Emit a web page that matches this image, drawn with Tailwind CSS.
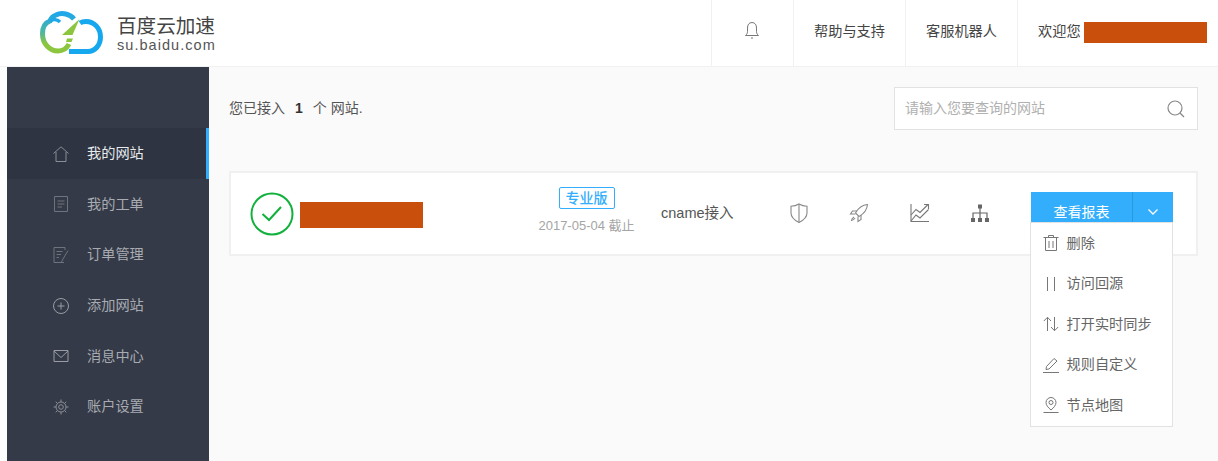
<!DOCTYPE html>
<html lang="zh-CN">
<head>
<meta charset="utf-8">
<script src="https://cdn.jsdelivr.net/npm/@tailwindcss/browser@4"></script>
<title>百度云加速</title>
</head>
<body class="w-[1218px] h-[461px] overflow-hidden bg-[#fdfdfd] font-['Liberation_Sans','Noto_Sans_CJK_SC',sans-serif] text-[14px] text-[#555]">
<header class="h-[67px] bg-white flex border-b border-[#f1f1f1]">
  <div class="w-[711px] flex items-center pl-[40px] gap-[14px]">
    <svg width="63" height="44" viewBox="40 9 63 44" fill="none">
      <defs><linearGradient id="g" x1="0" y1="0" x2="0" y2="1"><stop offset="0" stop-color="#1ea7ea"/><stop offset="0.5" stop-color="#4fb7a0"/><stop offset="0.8" stop-color="#8cc63f"/></linearGradient></defs>
      <path d="M74 17C70 12 62 10 56 13C53 14 51 16 50 19C44 21 42.500 27 42.500 32C42.500 42 50 49 58 49C63 49 67 46 69 42" stroke="url(#g)" stroke-width="5"/>
      <path d="M50 19C53 17 57 17 60 20" stroke="#1ea7ea" stroke-width="3.500"/>
      <path d="M69 49.500H88C95 49.500 100.500 43 100.500 35C100.500 26 94 19.500 86 19.500C83.500 19.500 81.500 20 80 21" stroke="#16a8ee" stroke-width="5"/>
      <path d="M79.500 17L62 33H72.500ZM67 36.500H73L71.500 40H66Z" fill="#8cc63f"/>
    </svg>
    <div class="leading-none text-[#444] pt-[1px]">
      <div class="text-[19.6px] leading-[23px]">百度云加速</div>
      <div class="text-[14.5px] leading-[15px] tracking-[1.05px] text-[#555] font-['Liberation_Sans',sans-serif]">su.baidu.com</div>
    </div>
  </div>
  <div class="w-[82px] border-l border-[#f1f1f1] flex items-center justify-center pb-[6px] pr-[2px]">
    <svg width="16" height="18" viewBox="0 0 16 18" fill="none" stroke="#777" stroke-width="1"><path d="M8 1.500C4.800 1.500 3.500 4 3.500 7V10.500C3.500 12.500 2.500 13.500 1.500 14.500H14.500C13.500 13.500 12.500 12.500 12.500 10.500V7C12.500 4 11.200 1.500 8 1.500Z"/><path d="M7 17H9"/></svg>
  </div>
  <div class="w-[112px] border-l border-[#f1f1f1] flex items-center justify-center text-[14.2px] text-[#444] pb-[2px]">帮助与支持</div>
  <div class="w-[112px] border-l border-[#f1f1f1] flex items-center justify-center text-[14.2px] text-[#444] pb-[2px]">客服机器人</div>
  <div class="flex-1 border-l border-[#f1f1f1] flex items-center pl-[20px] gap-[3px] text-[14.2px] text-[#444] pb-[2px]">
    <span>欢迎您</span>
    <span class="w-[123px] h-[21px] bg-[#c94f0c]"></span>
  </div>
</header>
<div class="flex h-[394px] pl-[7px]">
  <nav class="w-[202px] bg-[#343a47] pt-[61px] text-[14.2px] text-[#a8abb2] shrink-0">
    <a class="h-[51px] flex items-center gap-[18px] pl-[46px] bg-[#2e3441] border-r-[3px] border-[#33aefc] text-[#e8eaec]">
      <svg class="w-[16px] h-[16px] shrink-0" viewBox="0 0 16 16" fill="none" stroke="#8a8e97"><path d="M0.500 7.500L8 0.800L15.500 7.500"/><path d="M3 6V15.500H13V6"/></svg>
      <span>我的网站</span>
    </a>
    <a class="h-[50.500px] flex items-center gap-[18px] pl-[46px]">
      <svg class="w-[16px] h-[16px] shrink-0" viewBox="0 0 16 16" fill="none" stroke="#6f737d"><path d="M1.500 0.500H14.500V15.500H1.500Z"/><path d="M4.500 5H11.500M4.500 8H11.500M4.500 11H9"/></svg>
      <span>我的工单</span>
    </a>
    <a class="h-[50.500px] flex items-center gap-[18px] pl-[46px]">
      <svg class="w-[16px] h-[16px] shrink-0" viewBox="0 0 16 16" fill="none" stroke="#6f737d"><path d="M11 15.500H1V0.500H12V3"/><path d="M3.500 4.500H9.500M3.500 7.500H8M3.500 10.500H6"/><path d="M10 12L15 3.500M8.500 15L10 12"/></svg>
      <span>订单管理</span>
    </a>
    <a class="h-[51px] flex items-center gap-[18px] pl-[46px]">
      <svg class="w-[16px] h-[16px] shrink-0" viewBox="0 0 16 16" fill="none" stroke="#9a9da5"><circle cx="8" cy="8" r="7.500"/><path d="M8 4.500V11.500M4.500 8H11.500"/></svg>
      <span>添加网站</span>
    </a>
    <a class="h-[50.500px] flex items-center gap-[18px] pl-[46px]">
      <svg class="w-[16px] h-[16px] shrink-0" viewBox="0 0 16 16" fill="none" stroke="#9a9da5"><path d="M1 2.500H15V13.500H1Z"/><path d="M1 3L8 9.500L15 3"/></svg>
      <span>消息中心</span>
    </a>
    <a class="h-[50.500px] flex items-center gap-[18px] pl-[46px]">
      <svg class="w-[16px] h-[16px] shrink-0" viewBox="0 0 16 16" fill="none" stroke="#8a8e97"><circle cx="8" cy="8" r="5"/><circle cx="8" cy="8" r="2.300"/><path d="M8 0.500V3M8 13V15.500M0.500 8H3M13 8H15.500M2.700 2.700L4.500 4.500M11.500 11.500L13.300 13.300M13.300 2.700L11.500 4.500M4.500 11.500L2.700 13.300"/></svg>
      <span>账户设置</span>
    </a>
  </nav>
  <main class="flex-1 pl-[20px] pr-[20px] pt-[20px] bg-[#fafafa]">
    <div class="flex justify-between items-center h-[43px]">
      <div class="text-[14px] text-[#555] flex items-center">您已接入<b class="mx-[10px] text-[14px] text-[#333]">1</b>个 网站.</div>
      <div class="w-[304px] h-[43px] bg-white border border-[#e2e2e2] flex items-center justify-between pl-[10px] pr-[12px]">
        <span class="text-[#b0b0b0] text-[14px]">请输入您要查询的网站</span>
        <svg class="w-[18px] h-[18px]" viewBox="0 0 18 18" fill="none" stroke="#888" stroke-width="1.200"><circle cx="8" cy="8" r="7"/><path d="M13 13L17 17"/></svg>
      </div>
    </div>
    <section class="relative mt-[41px] h-[85px] bg-white border-2 border-[#f0f0f0] flex items-center">
      <svg class="ml-[19px] shrink-0" width="44" height="44" viewBox="0 0 44 44" fill="none" stroke="#12b03c"><circle cx="22" cy="22" r="20.500" stroke-width="2"/><path d="M12.500 22L19 28L31 15" stroke-width="2"/></svg>
      <span class="ml-[6px] w-[123px] h-[26px] bg-[#c94f0c] shrink-0 mt-[2px]"></span>
      <div class="w-[95px] ml-[116px] flex flex-col items-center shrink-0 pb-[4px]">
        <span class="w-[56px] h-[22px] border border-[#33aefc] rounded-[2px] text-[#33aefc] text-[14px] font-medium flex items-center justify-center">专业版</span>
        <span class="mt-[7px] text-[13px] leading-[20px] text-[#a5a5a5] whitespace-nowrap">2017-05-04 截止</span>
      </div>
      <span class="ml-[27px] w-[73px] text-[14.5px] text-[#555] shrink-0 whitespace-nowrap">cname接入</span>
      <div class="ml-[55px] flex gap-[40px] shrink-0 items-center pb-[2px]">
        <svg width="20" height="20" viewBox="0 0 20 20" fill="none" stroke="#888" stroke-width="1.100"><path d="M10 1C7.500 2.500 5 3.200 2 3.200V10C2 14.500 6 17.500 10 19.500C14 17.500 18 14.500 18 10V3.200C15 3.200 12.500 2.500 10 1Z"/><path d="M10 1V19.500"/></svg>
        <svg width="20" height="20" viewBox="0 0 20 20" fill="none" stroke="#888" stroke-width="1.100"><path d="M18.500 1.500C13 2 9 5.500 6.500 10L10 13.500C14.500 11 18 7 18.500 1.500Z"/><path d="M8 8H3.500L1.500 11H6.500M12 12V16.500L9 18.500V13.500M5 14C3.500 15 2.500 16.500 2.500 17.500C3.500 17.500 5 16.500 6 15"/></svg>
        <svg class="ml-[1px]" width="20" height="20" viewBox="0 0 20 20" fill="none" stroke="#777" stroke-width="1.100"><path d="M1 1V18.500H19"/><path d="M1 12L6 6.500L10 9.500L18 1.500M14 1.500H18.500V6"/><path d="M1 18L6 12L10 15L18.500 6.500"/></svg>
        <svg width="20" height="20" viewBox="0 0 20 20" fill="none" stroke="#666" stroke-width="1.200"><path d="M10 5V15M3 15V10H17V15"/><rect x="8" y="1.500" width="4" height="4" fill="#666" stroke="none"/><rect x="1" y="15" width="4" height="4" fill="#666" stroke="none"/><rect x="8" y="15" width="4" height="4" fill="#666" stroke="none"/><rect x="15" y="15" width="4" height="4" fill="#666" stroke="none"/></svg>
      </div>
      <div class="absolute left-[800px] top-[19px] w-[142px] h-[32px] bg-[#33aefc] text-white flex text-[14px]">
        <span class="w-[101px] flex items-center justify-center pt-[8px]">查看报表</span>
        <span class="flex-1 border-l border-[#2a98dd] flex items-center justify-center pt-[8px]">
          <svg width="10" height="6" viewBox="0 0 10 6" fill="none" stroke="#fff" stroke-width="1.300"><path d="M0.500 0.500L5 5L9.500 0.500"/></svg>
        </span>
      </div>
      <ul class="absolute left-[799px] top-[49px] w-[143px] h-[205px] bg-white border border-[#e2e2e2] text-[14.2px] text-[#666] z-10">
        <li class="h-[40.500px] flex items-center gap-[7.500px] pl-[12px]">
          <svg width="16" height="16" viewBox="0 0 16 16" fill="none" stroke="#777"><path d="M0.500 2.500H15.500M5.500 2.500V0.500H10.500V2.500M2.500 2.500V15.500H13.500V2.500M6 6V13M10 6V13"/></svg><span>删除</span>
        </li>
        <li class="h-[40.500px] flex items-center gap-[7.500px] pl-[12px]">
          <svg width="16" height="16" viewBox="0 0 16 16" fill="none" stroke="#777"><path d="M4.500 1V15M11.500 1V15"/></svg><span>访问回源</span>
        </li>
        <li class="h-[40.500px] flex items-center gap-[7.500px] pl-[12px]">
          <svg width="16" height="16" viewBox="0 0 16 16" fill="none" stroke="#777"><path d="M4.500 15V1.500M0.800 5L4.500 1.300L8 5M11.500 1V14.500M8 11L11.500 14.700L15.200 11"/></svg><span>打开实时同步</span>
        </li>
        <li class="h-[40.500px] flex items-center gap-[7.500px] pl-[12px]">
          <svg width="16" height="16" viewBox="0 0 16 16" fill="none" stroke="#777"><path d="M0 15.500H16M3 12.500L3.500 9.500L11 1.500L14 4L6 12Z"/></svg><span>规则自定义</span>
        </li>
        <li class="h-[40.500px] flex items-center gap-[7.500px] pl-[12px]">
          <svg width="16" height="16" viewBox="0 0 16 16" fill="none" stroke="#777"><path d="M8 13C5 10.500 3 8 3 5.500C3 2.800 5.200 0.500 8 0.500C10.800 0.500 13 2.800 13 5.500C13 8 11 10.500 8 13Z"/><circle cx="8" cy="5.500" r="2"/><path d="M0.500 15.500H15.500"/></svg><span>节点地图</span>
        </li>
      </ul>
    </section>
  </main>
</div>
</body>
</html>
